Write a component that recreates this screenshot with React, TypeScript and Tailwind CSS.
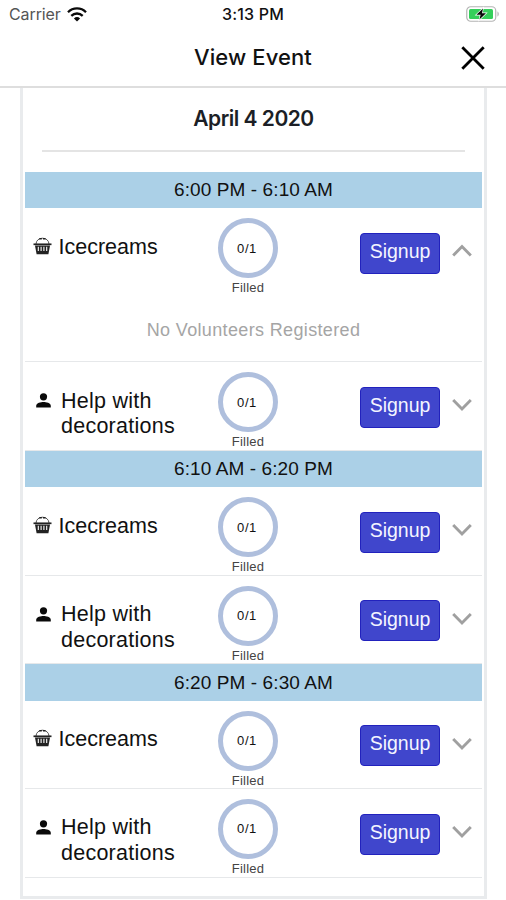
interface Slot {
  id: string;
  name: string;
  kind: "item" | "person";
  filled: number;
  needed: number;
  expanded?: boolean;
}

interface TimeBlock {
  time: string;
  slots: Slot[];
}

const TIME_BLOCKS: TimeBlock[] = [
  {
    time: "6:00 PM - 6:10 AM",
    slots: [
      { id: "1", name: "Icecreams", kind: "item", filled: 0, needed: 1, expanded: true },
      { id: "2", name: "Help with decorations", kind: "person", filled: 0, needed: 1 },
    ],
  },
  {
    time: "6:10 AM - 6:20 PM",
    slots: [
      { id: "3", name: "Icecreams", kind: "item", filled: 0, needed: 1 },
      { id: "4", name: "Help with decorations", kind: "person", filled: 0, needed: 1 },
    ],
  },
  {
    time: "6:20 PM - 6:30 AM",
    slots: [
      { id: "5", name: "Icecreams", kind: "item", filled: 0, needed: 1 },
      { id: "6", name: "Help with decorations", kind: "person", filled: 0, needed: 1 },
    ],
  },
];

function WifiIcon() {
  return (
    <svg width="20" height="15" viewBox="0 0 20 15" fill="none" stroke="#0a0a0a" strokeWidth="2.3">
      <path d="M1 5.2a12.7 12.7 0 0 1 18 0" />
      <path d="M4.3 8.8a8.2 8.2 0 0 1 11.4 0" />
      <path d="M10 14.6 6.9 11.5a4.5 4.5 0 0 1 6.2 0Z" fill="#0a0a0a" stroke="none" />
    </svg>
  );
}

function BatteryIcon() {
  return (
    <svg width="34" height="16" viewBox="0 0 34 16">
      <rect x="0.75" y="0.75" width="29" height="14.5" rx="4" fill="#fff" stroke="#b4b4b4" strokeWidth="1.2" />
      <rect x="3" y="3" width="24" height="10" rx="1.5" fill="#35cf5b" />
      <path d="M31.5 5.5c1.6.6 1.6 4.4 0 5Z" fill="#a9a9a9" />
      <path
        d="M17 2.4 10.4 8.8h4.2l-1.2 4.8 6.6-6.4H16Z"
        fill="#0a0a0a"
        stroke="#fff"
        strokeWidth="1.4"
        paintOrder="stroke"
      />
    </svg>
  );
}

function BasketIcon() {
  return (
    <svg width="19" height="18" viewBox="0 0 19 18" fill="none" stroke="#222">
      <path d="M3 7C3.2 3.4 6 1.2 9.5 1.2s6.3 2.2 6.5 5.8" strokeWidth="1" stroke="#555" />
      <path d="M6.3 1.8h6.4" strokeWidth="1.5" strokeDasharray="2.5 1.2" />
      <path d="M0.5 7.3h18" strokeWidth="1.7" />
      <path d="M2 8.5h15l-1.6 8.7H3.6Z" fill="#222" stroke="none" />
      <path d="M5.3 9.8v4.2M8.1 9.8v4.2M10.9 9.8v4.2M13.7 9.8v4.2" stroke="#fff" strokeWidth="1.1" />
    </svg>
  );
}

function PersonIcon() {
  return (
    <svg width="15" height="15" viewBox="0 0 15 15" fill="#0a0a0a">
      <circle cx="7.5" cy="3.8" r="3.6" />
      <path d="M0.2 14.6v-1.9c0-2.500 4.800-3.600 7.300-3.600s7.300 1.100 7.300 3.600v1.900Z" />
    </svg>
  );
}

function Chevron({ up }: { up?: boolean }) {
  return (
    <svg width="20" height="14" viewBox="0 0 20 14" fill="none" stroke="#a0a0a0" strokeWidth="2.9">
      <path d={up ? "M1.2 11.500 10 2.500l8.800 9" : "M1.2 2 10 11l8.800-9"} />
    </svg>
  );
}

function SlotRow({ slot }: { slot: Slot }) {
  const isItem = slot.kind === "item";

  return (
    <div className="border-b border-[#e6e8ea]">
      <div className="flex h-[87.5px] items-start">
        <div className={`flex w-[193px] shrink-0 ${isItem ? "pl-2" : "pl-[11px]"} pt-[26.3px]`}>
          <div className={`shrink-0 ${isItem ? "mt-[2px] w-[25.5px]" : "mt-[4.7px] w-[25px]"}`}>
            {isItem ? <BasketIcon /> : <PersonIcon />}
          </div>
          <p
            className={`-mr-2 w-[135px] text-[21.5px] leading-[25.5px] text-[#111] ${
              isItem ? "tracking-[0px]" : "tracking-[0.25px]"
            }`}
          >
            {slot.name}
          </p>
        </div>
        <div className="flex w-[60px] shrink-0 flex-col items-center pt-2.5">
          <div className="flex size-[60px] items-center justify-center rounded-full border-[5px] border-[#afbfdd] text-[13px] text-[#111]">
            <span className="-ml-0.5 tracking-[0.6px]">
              {slot.filled}/{slot.needed}
            </span>
          </div>
          <span className="mt-px text-[13px] leading-[17px] tracking-[0.2px] text-[#444]">Filled</span>
        </div>
        <button className="mt-[24.4px] ml-[82px] h-[41px] w-[80px] shrink-0 rounded-[4px] border border-[#2222bd] bg-[#4046cc] pb-[3px] text-[19.5px] text-[#f4f5ff]">
          Signup
        </button>
        <button className="mt-9 ml-3">
          <Chevron up={slot.expanded} />
        </button>
      </div>
      {slot.expanded && (
        <p className="h-[65.5px] pt-[22px] text-center text-[18px] leading-[24px] tracking-[0.35px] text-[#a5a5a5]">
          No Volunteers Registered
        </p>
      )}
    </div>
  );
}

export default function App() {
  return (
    <div className="flex h-[900px] w-[506px] flex-col overflow-hidden bg-white font-['Liberation_Sans',Arial,sans-serif]">
      <header className="h-[88px] shrink-0 border-b-2 border-[#dedede] font-['Inter',sans-serif]">
        <div className="grid h-[28px] grid-cols-3 items-center pr-[6px] pl-[9px] text-[16px]">
          <div className="flex items-center gap-[6px]">
            <span className="tracking-[-0.1px] text-[#555]">Carrier</span>
            <WifiIcon />
          </div>
          <span className="-ml-[3px] text-center font-medium tracking-[0.2px] text-[#111]">3:13 PM</span>
          <div className="flex justify-end">
            <BatteryIcon />
          </div>
        </div>
        <div className="grid h-[59px] grid-cols-[1fr_auto_1fr] items-center pr-[21px] pl-[21px]">
          <span />
          <h1 className="text-[22px] font-medium tracking-[0.1px] text-[#111]">View Event</h1>
          <button className="justify-self-end">
            <svg width="24" height="24" viewBox="0 0 24 24" fill="none" stroke="#000" strokeWidth="2.8">
              <path d="m1.3 1.3 21.4 21.4M22.7 1.3 1.3 22.7" />
            </svg>
          </button>
        </div>
      </header>

      <main className="ml-5 h-[811px] w-[467px] border-x-[3px] border-b-[3px] border-[#e9ebed] px-[2px]">
        <div className="mx-[17px] flex h-[64px] items-center justify-center border-b-2 border-[#e4e4e4]">
          <h2 className="font-['Inter',sans-serif] text-[21px] font-semibold tracking-[-0.5px] text-[#1c1f26]">
            April 4 2020
          </h2>
        </div>
        <div className="mt-5">
          {TIME_BLOCKS.map((block) => (
            <section key={block.time}>
              <div className="flex h-[36.4px] items-center justify-center bg-[#abd0e7] pt-px text-[19px] tracking-[0.1px] text-[#111]">
                {block.time}
              </div>
              {block.slots.map((slot) => (
                <SlotRow key={slot.id} slot={slot} />
              ))}
            </section>
          ))}
        </div>
      </main>
    </div>
  );
}
